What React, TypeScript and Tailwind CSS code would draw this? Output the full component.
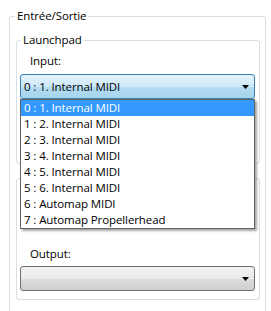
import React from "react";

const items = [
  "0 : 1. Internal MIDI",
  "1 : 2. Internal MIDI",
  "2 : 3. Internal MIDI",
  "3 : 4. Internal MIDI",
  "4 : 5. Internal MIDI",
  "5 : 6. Internal MIDI",
  "6 : Automap MIDI",
  "7 : Automap Propellerhead",
];

const Arrow = () => (
  <svg width="7" height="4" viewBox="0 0 7 4" className="shrink-0">
    <polygon points="0,0 7,0 3.5,4" fill="#000" />
  </svg>
);

export default function App() {
  const selected = 0;

  return (
    <div
      className="relative w-[271px] h-[311px] overflow-hidden bg-white text-[11.5px] tracking-[-0.1px] text-black"
      style={{ fontFamily: '"Segoe UI", "Open Sans", sans-serif' }}
    >
      {/* Entrée/Sortie group */}
      <fieldset className="ml-[9px] mt-[8px] w-[257px] h-[330px] border border-[#d5dfe5] rounded-[3px]">
        <legend className="ml-[5px] px-[2px] leading-[16px]">Entrée/Sortie</legend>

        {/* Launchpad group */}
        <fieldset className="ml-[6px] mt-[8px] w-[244px] h-[132px] border border-[#d5dfe5] rounded-[3px]">
          <legend className="ml-[4px] px-[2px] leading-[16px]">Launchpad</legend>
          <div className="mt-[5px] ml-[13px] leading-[16px]">Input:</div>
          <div className="mt-[5px] ml-[3px] mr-[4px] h-[25px] flex items-center justify-between pl-[3px] pr-[5px] border border-[#3c7fb1] rounded-[3px] bg-[linear-gradient(#e3f3fc_0%,#cde8f8_50%,#b4dcf2_50%,#a5d4ee_100%)]">
            <span className="leading-[16px]">{items[selected]}</span>
            <Arrow />
          </div>
        </fieldset>

        {/* second group (title hidden under the open list) */}
        <div className="ml-[6px] mt-[14px] w-[244px] h-[122px] border border-[#d5dfe5] rounded-[3px] flex flex-col justify-end pb-[8px]">
          <div className="ml-[13px] leading-[16px]">Output:</div>
          <div className="mt-[4px] ml-[3px] mr-[4px] h-[25px] flex items-center justify-end pr-[5px] border border-[#707070] rounded-[3px] bg-[linear-gradient(#f2f2f2_0%,#ebebeb_50%,#dddddd_50%,#cfcfcf_100%)]">
            <Arrow />
          </div>
        </div>
      </fieldset>

      {/* open dropdown list */}
      <div className="absolute left-[20px] top-[99px] w-[235px] border border-[#646464] bg-white shadow-[2px_2px_2px_rgba(0,0,0,0.35)]">
        {items.map((label, i) => (
          <div
            key={label}
            className={
              i === selected
                ? "h-[16px] leading-[16px] pl-[3px] bg-[#3399ff] text-white"
                : "h-[16px] leading-[16px] pl-[3px]"
            }
          >
            {label}
          </div>
        ))}
      </div>
    </div>
  );
}
